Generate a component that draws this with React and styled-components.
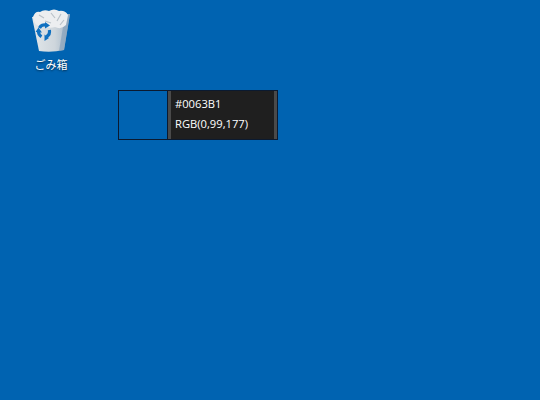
import React from 'react';
import styled, { createGlobalStyle } from 'styled-components';

const GlobalStyle = createGlobalStyle`
    html, body {
        margin: 0;
        padding: 0;
        background: #0063b1;
    }
`

const Desktop = styled.div`
    width: 540px;
    height: 400px;
    overflow: hidden;
    background: #0063b1;
    display: flex;
    flex-direction: column;
    font-family: "Open Sans", "Noto Sans CJK JP", sans-serif;
`

const DesktopIcon = styled.div`
    width: 60px;
    margin: 8px 0 0 21px;
    display: flex;
    flex-direction: column;
    align-items: center;
`

const IconLabel = styled.span`
    margin-top: 6px;
    height: 14px;
    line-height: 14px;
    font-size: 11px;
    color: #fff;
    text-shadow: 0 1px 2px rgba(0, 0, 0, 0.6);
`

const ColorPopup = styled.div`
    width: 160px;
    height: 50px;
    margin: 18px 0 0 118px;
    box-sizing: border-box;
    display: flex;
    border: 1px solid #0b1a30;
`

const Swatch = styled.div`
    width: 48px;
    background: ${(props) => props.color};
    border-right: 1px solid #0b1a30;
`

const InfoPanel = styled.div`
    flex: 1;
    box-sizing: border-box;
    display: flex;
    flex-direction: column;
    gap: 4px;
    padding: 5px 0 0 4px;
    background: #1f1f1f;
    border-left: 3px solid #4a4a4a;
    border-right: 3px solid #4a4a4a;
    color: #fff;
    font-size: 11.2px;
`

const InfoLine = styled.div`
    height: 16px;
    line-height: 16px;
`

function RecycleBin() {
    return <svg width="40" height="44" viewBox="0 0 40 44">
        <defs>
            <linearGradient id="binBody" x1="0" y1="0" x2="1" y2="0">
                <stop offset="0" stopColor="#e2e7ea" />
                <stop offset="0.6" stopColor="#ced6dc" />
                <stop offset="1" stopColor="#9fb3c6" />
            </linearGradient>
        </defs>
        <path d="M1 9 L39 6 L33 42 Q20 45 8 43 Z" fill="url(#binBody)" />
        <path d="M34 7 L28 43 L33 42 L39 6 Z" fill="#86a1ba" opacity="0.7" />
        <path d="M2 9 Q4 3 9 4 Q13 1 18 3 Q23 0 28 3 Q34 2 37 7 L35 17 Q30 22 24 19 Q18 21 13 18 Q7 19 4 15 Z" fill="#eceef0" />
        <path d="M8 7 L13 10 M20 5 L24 10 M30 6 L26 13 M14 13 L20 15 M33 12 L29 17" stroke="#b9c1c8" strokeWidth="1.2" fill="none" />
        <g fill="none" stroke="#0f70c0" strokeWidth="3.2">
            <path d="M8.5 20 A5.5 6 0 0 1 15 17.2" />
            <path d="M18.4 22 A5.5 6 0 0 1 15.5 28.6" />
            <path d="M10.5 28.6 A5.5 6 0 0 1 7.5 23.5" />
        </g>
        <path d="M14 14 L19 17.5 L14 20.5 Z M18 30 L13.5 33 L13.5 26.5 Z M4.5 24 L11 24.5 L7.5 19.5 Z" fill="#0f70c0" />
    </svg>
}

function App() {
    return <Desktop>
        <GlobalStyle />
        <DesktopIcon>
            <RecycleBin />
            <IconLabel>ごみ箱</IconLabel>
        </DesktopIcon>
        <ColorPopup>
            <Swatch color="#0063b1" />
            <InfoPanel>
                <InfoLine>#0063B1</InfoLine>
                <InfoLine>RGB(0,99,177)</InfoLine>
            </InfoPanel>
        </ColorPopup>
    </Desktop>
}

export default App;
